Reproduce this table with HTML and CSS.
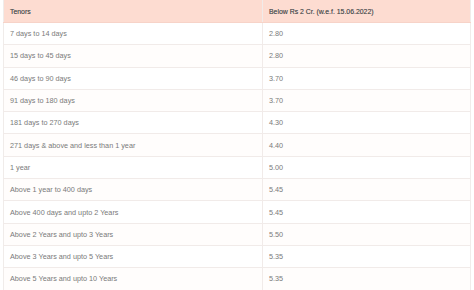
FILE: index.html
```html
<!DOCTYPE html>
<html>
<head>
    <title>Tenors</title>
    <link rel="stylesheet" href="styles.css">
</head>
<body>
    <table class="rates">
        <thead>
            <tr>
                <th class="tenor">Tenors</th>
                <th>Below Rs 2 Cr. (w.e.f. 15.06.2022)</th>
            </tr>
        </thead>
        <tbody>
            <tr><td>7 days to 14 days</td><td>2.80</td></tr>
            <tr><td>15 days to 45 days</td><td>2.80</td></tr>
            <tr><td>46 days to 90 days</td><td>3.70</td></tr>
            <tr><td>91 days to 180 days</td><td>3.70</td></tr>
            <tr><td>181 days to 270 days</td><td>4.30</td></tr>
            <tr><td>271 days &amp; above and less than 1 year</td><td>4.40</td></tr>
            <tr><td>1 year</td><td>5.00</td></tr>
            <tr><td>Above 1 year to 400 days</td><td>5.45</td></tr>
            <tr><td>Above 400 days and upto 2 Years</td><td>5.45</td></tr>
            <tr><td>Above 2 Years and upto 3 Years</td><td>5.50</td></tr>
            <tr><td>Above 3 Years and upto 5 Years</td><td>5.35</td></tr>
            <tr><td>Above 5 Years and upto 10 Years</td><td>5.35</td></tr>
        </tbody>
    </table>
</body>
</html>
```

FILE: styles.css
```css
body {
    margin: 0;
    background-color: #fff;
    font-family: "Liberation Sans", Arial, sans-serif;
}

.rates {
    margin-left: 3px;
    width: 468px;
    border-collapse: collapse;
    border-left: 1px solid #f0ecea;
    border-right: 1px solid #f0ecea;
}

.rates th {
    background-color: #fddcd1;
    color: #555;
    font-size: 6.9px;
    font-weight: normal;
    text-shadow: 0 0 0.4px #777;
    text-align: left;
    height: 22px;
    padding: 0 0 0 6px;
    border-bottom: 1px solid #f7d3c8;
}

.rates th.tenor {
    width: 252px;
}

.rates td {
    color: #7a7a7a;
    font-size: 7.25px;
    height: 21.3px;
    padding: 0 0 0 6px;
    border-bottom: 1px solid #f1ebe9;
}

.rates td + td,
.rates th + th {
    border-left: 1px solid #f1ebe9;
}

.rates tbody tr:nth-child(even) td {
    background-color: #fffdfc;
}
```
